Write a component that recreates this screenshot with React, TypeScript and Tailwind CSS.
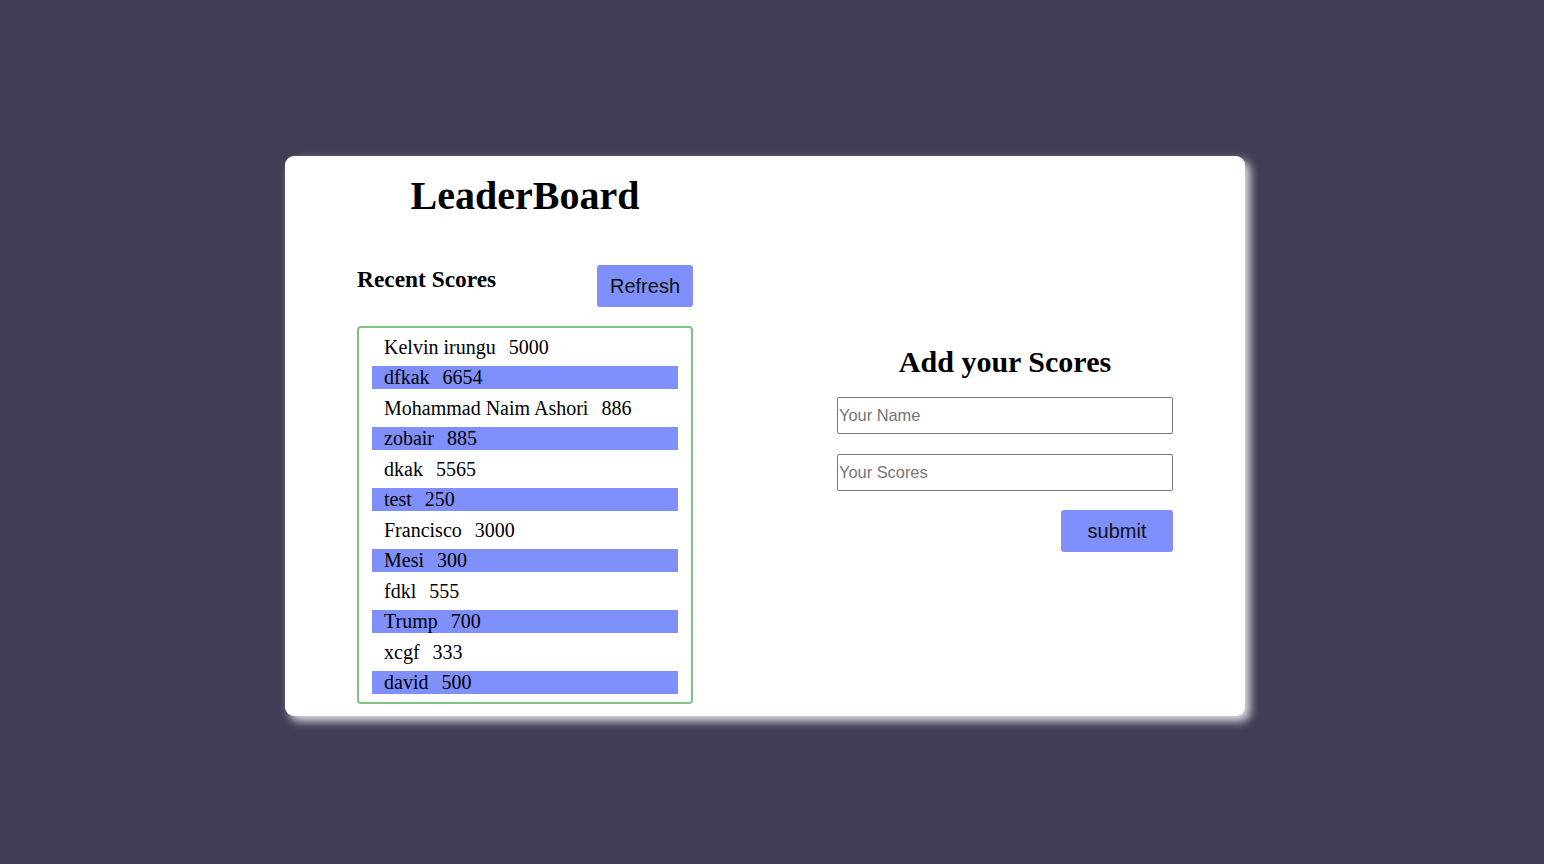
const scores = [
  { name: "Kelvin irungu", score: 5000 },
  { name: "dfkak", score: 6654 },
  { name: "Mohammad Naim Ashori", score: 886 },
  { name: "zobair", score: 885 },
  { name: "dkak", score: 5565 },
  { name: "test", score: 250 },
  { name: "Francisco", score: 3000 },
  { name: "Mesi", score: 300 },
  { name: "fdkl", score: 555 },
  { name: "Trump", score: 700 },
  { name: "xcgf", score: 333 },
  { name: "david", score: 500 },
]

export default function App() {
  return (
    <div className="min-h-screen bg-[#403d56] flex items-center justify-center font-['Liberation_Serif',serif] text-[20px] text-black">
      <div className="w-[960px] h-[560px] bg-white rounded-[9px] shadow-[5px_5px_10px_rgba(255,255,255,0.85)] px-[72px] flex gap-[144px] mt-[8px] -ml-[14px]">
        {/* scores column */}
        <div className="w-[336px] flex flex-col">
          <h1 className="mt-[18px] text-[40px] font-bold leading-[44px] text-center">LeaderBoard</h1>
          <div className="mt-[47px] flex items-start justify-between">
            <h3 className="text-[23.4px] font-bold leading-[27px] mt-[1px]">Recent Scores</h3>
            <button className="w-[96px] h-[42px] bg-[#7f8ffc] rounded-[3px] text-[#111] text-[20px] font-['Liberation_Sans',Arial,sans-serif]">
              Refresh
            </button>
          </div>
          <ul className="mt-[19px] border-2 border-[#7fc281] rounded-[4px] px-[13px] py-[7.5px] flex flex-col gap-[7.5px]">
            {scores.map((s, i) => (
              <li
                key={s.name}
                className={`h-[23px] leading-[23px] pl-[12px] whitespace-nowrap ${i % 2 === 1 ? "bg-[#7f8ffc]" : ""}`}
              >
                <span>{s.name}</span>
                <span className="ml-[13px]">{s.score}</span>
              </li>
            ))}
          </ul>
        </div>

        {/* add score column */}
        <div className="w-[336px] flex flex-col pt-[189px]">
          <h2 className="text-[30px] font-bold leading-[33px] text-center">Add your Scores</h2>
          <form className="mt-[19px] flex flex-col gap-[20px]" onSubmit={(e) => e.preventDefault()}>
            <input
              type="text"
              placeholder="Your Name"
              className="h-[37px] border border-[#767676] rounded-[2px] px-[1px] text-[16.4px] font-['Liberation_Sans',Arial,sans-serif] placeholder:text-[#757575] outline-none"
            />
            <input
              type="text"
              placeholder="Your Scores"
              className="h-[37px] border border-[#767676] rounded-[2px] px-[1px] text-[16.4px] font-['Liberation_Sans',Arial,sans-serif] placeholder:text-[#757575] outline-none"
            />
            <div className="flex justify-end -mt-[1px]">
              <button
                type="submit"
                className="w-[112px] h-[42px] bg-[#7f8ffc] rounded-[3px] text-[#111] text-[20px] font-['Liberation_Sans',Arial,sans-serif]"
              >
                submit
              </button>
            </div>
          </form>
        </div>
      </div>
    </div>
  )
}
